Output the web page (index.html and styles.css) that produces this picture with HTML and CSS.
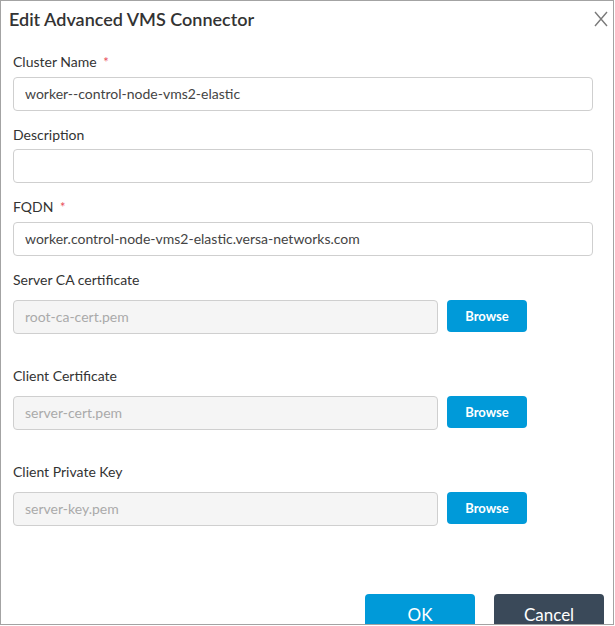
FILE: index.html
```
<!DOCTYPE html>
<html lang="en">
<head>
    <meta charset="UTF-8">
    <meta name="viewport" content="width=device-width, initial-scale=1.0">
    <title>Edit Advanced VMS Connector</title>
    <link rel="stylesheet" href="styles.css">
</head>
<body>
    <div class="dialog">
        <div class="dialog-header">
            <h2>Edit Advanced VMS Connector</h2>
            <span class="close">
                <svg width="14" height="16" viewBox="0 0 14 16">
                    <path d="M1 1 L13 15 M13 1 L1 15" stroke="#7a7a7a" stroke-width="1.4" fill="none"/>
                </svg>
            </span>
        </div>

        <div class="dialog-body">
            <div class="field">
                <label>Cluster Name <span class="req">*</span></label>
                <input type="text" class="text-input" value="worker--control-node-vms2-elastic">
            </div>
            <div class="field">
                <label>Description</label>
                <input type="text" class="text-input" value="">
            </div>
            <div class="field">
                <label>FQDN <span class="req">*</span></label>
                <input type="text" class="text-input" value="worker.control-node-vms2-elastic.versa-networks.com">
            </div>

            <!-- certificate uploads -->
            <div class="file-field first">
                <label>Server CA certificate</label>
                <div class="file-row">
                    <input type="text" class="file-input" value="root-ca-cert.pem" readonly>
                    <button class="browse">Browse</button>
                </div>
            </div>
            <div class="file-field">
                <label>Client Certificate</label>
                <div class="file-row">
                    <input type="text" class="file-input" value="server-cert.pem" readonly>
                    <button class="browse">Browse</button>
                </div>
            </div>
            <div class="file-field">
                <label>Client Private Key</label>
                <div class="file-row">
                    <input type="text" class="file-input" value="server-key.pem" readonly>
                    <button class="browse">Browse</button>
                </div>
            </div>
        </div>

        <div class="dialog-footer">
            <button class="btn btn-ok">OK</button>
            <button class="btn btn-cancel">Cancel</button>
        </div>
    </div>
</body>
</html>
```
FILE: styles.css
```
* {
    box-sizing: border-box;
}
body {
    margin: 0;
    font-family: Lato, "Open Sans", sans-serif;
    color: #333;
    background: #fff;
}
.dialog {
    width: 614px;
    height: 625px;
    border: 1px solid #a3a3a3;
    overflow: hidden;
    background: #fff;
}
.dialog-header {
    display: flex;
    justify-content: space-between;
    align-items: flex-start;
    padding: 7px 5px 0 8px;
}
.dialog-header h2 {
    margin: 0;
    font-size: 18px;
    line-height: 22px;
    font-weight: 600;
    color: #333;
}
.close {
    margin-top: 3px;
    width: 14px;
    height: 16px;
}
.dialog-body {
    padding: 23px 20px 0 12px;
}
.field {
    margin-bottom: 15px;
}
label {
    display: block;
    font-size: 14px;
    line-height: 17px;
    color: #333;
    margin-bottom: 6px;
}
.req {
    color: #e8505b;
    font-size: 13px;
    margin-left: 3px;
}
.text-input,
.file-input {
    display: block;
    height: 34px;
    padding: 0 11px 1px;
    border: 1px solid #cfcfcf;
    border-radius: 4px;
    font-family: Lato, "Open Sans", sans-serif;
    font-size: 14px;
    color: #444;
    background: #fff;
    outline: none;
}
.text-input {
    width: 580px;
}
.file-field {
    margin-bottom: 33px;
}
.file-field.first {
    margin-top: 1px;
}
.file-field label {
    margin-bottom: 12px;
}
.file-row {
    display: flex;
    align-items: flex-start;
    gap: 9px;
}
.file-input {
    width: 425px;
    background: #f5f5f5;
    color: #aaa;
}
.browse {
    width: 80px;
    height: 32px;
    border: none;
    border-radius: 4px;
    background: #009ad9;
    color: #fff;
    font-family: Lato, "Open Sans", sans-serif;
    font-size: 13px;
    font-weight: bold;
    cursor: pointer;
}
.dialog-footer {
    display: flex;
    justify-content: flex-end;
    gap: 19px;
    padding: 0 9px 0 0;
    margin-top: 68px;
}
.btn {
    width: 110px;
    height: 40px;
    flex-shrink: 0;
    border: none;
    border-radius: 4px;
    color: #fff;
    font-family: Lato, "Open Sans", sans-serif;
    font-size: 17px;
    cursor: pointer;
}
.btn-ok {
    background: #009ad9;
}
.btn-cancel {
    background: #3a4959;
}
```
